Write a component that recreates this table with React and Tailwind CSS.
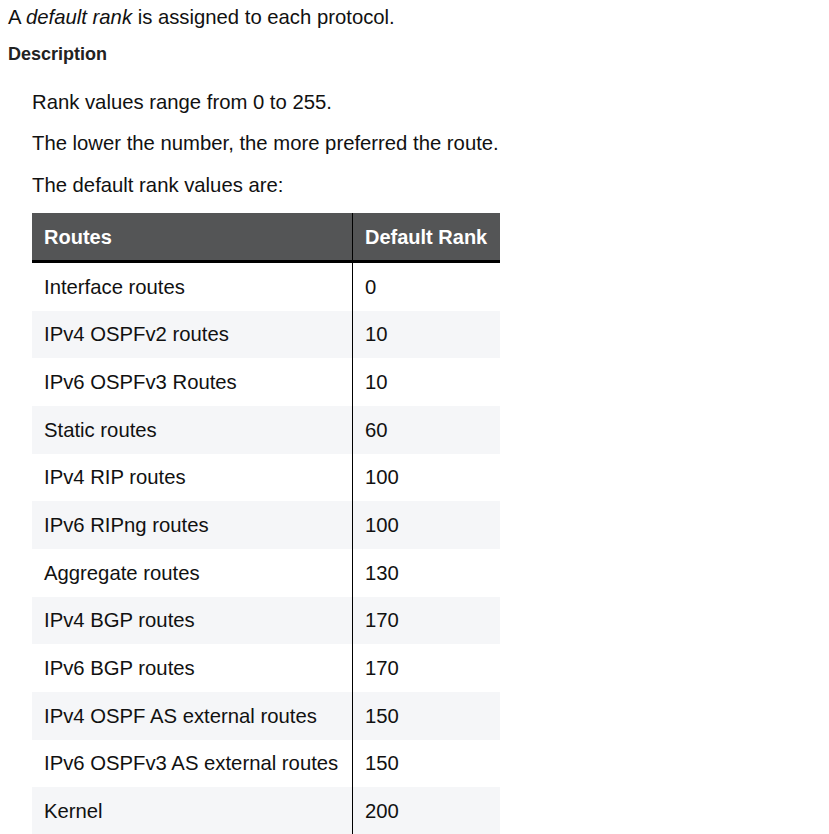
export default function App() {
  const rows = [
    ["Interface routes", "0"],
    ["IPv4 OSPFv2 routes", "10"],
    ["IPv6 OSPFv3 Routes", "10"],
    ["Static routes", "60"],
    ["IPv4 RIP routes", "100"],
    ["IPv6 RIPng routes", "100"],
    ["Aggregate routes", "130"],
    ["IPv4 BGP routes", "170"],
    ["IPv6 BGP routes", "170"],
    ["IPv4 OSPF AS external routes", "150"],
    ["IPv6 OSPFv3 AS external routes", "150"],
    ["Kernel", "200"],
  ];
  return (
    <div className="w-[829px] h-[834px] overflow-hidden bg-white text-[#111] text-[20.3px]" style={{ fontFamily: '"Liberation Sans", Arial, sans-serif' }}>
      <div className="pl-[8px] pt-[5px] leading-[24px]">
        A <i>default rank</i> is assigned to each protocol.
      </div>
      <div className="pl-[8px] mt-[13px] leading-[24px] text-[18px] font-bold text-[#222]">Description</div>
      <div className="pl-[32px]">
        <p className="mt-[24px] leading-[24px]">Rank values range from 0 to 255.</p>
        <p className="mt-[17px] leading-[24px]">The lower the number, the more preferred the route.</p>
        <p className="mt-[18px] leading-[24px]">The default rank values are:</p>
        <div className="mt-[16px] w-[468px]">
          <div className="flex h-[47px] bg-[#545556] text-white font-bold text-[20px] border-b-[3px] border-black box-content">
            <div className="w-[321px] pl-[12px] flex items-center border-r border-black">Routes</div>
            <div className="flex-1 pl-[12px] flex items-center">Default Rank</div>
          </div>
          {rows.map(([a, b], i) => (
            <div key={i} className={`flex h-[47.67px] ${i % 2 === 1 ? "bg-[#f5f6f8]" : "bg-white"}`}>
              <div className="w-[321px] pl-[12px] flex items-center border-r border-black">{a}</div>
              <div className="flex-1 pl-[12px] flex items-center">{b}</div>
            </div>
          ))}
        </div>
      </div>
    </div>
  );
}
